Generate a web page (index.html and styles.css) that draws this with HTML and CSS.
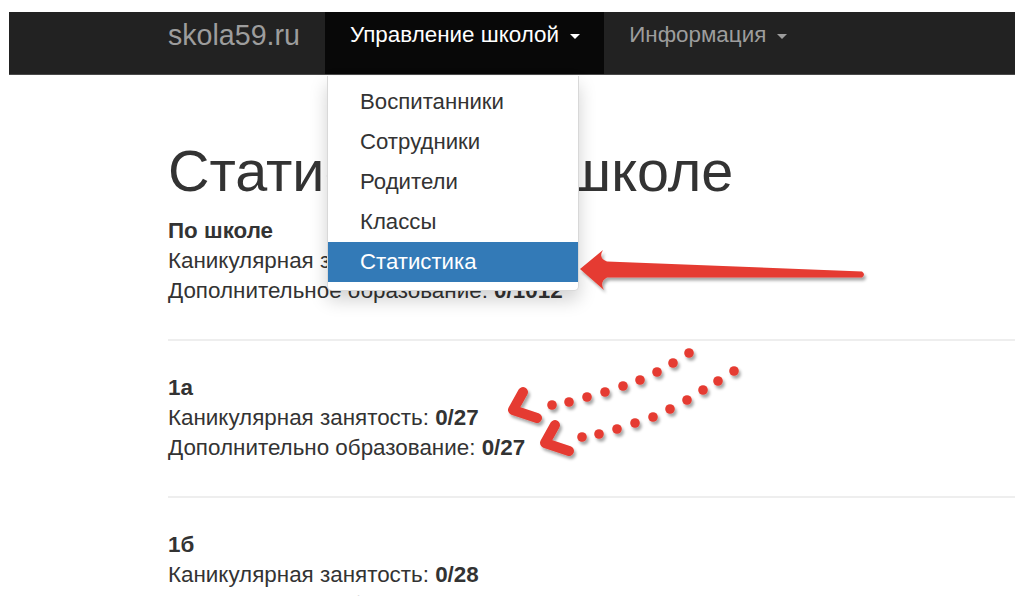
FILE: index.html
```html
<!DOCTYPE html>
<html lang="ru">
<head>
<meta charset="utf-8">
<title>skola59.ru — Статистика по школе</title>
<link rel="stylesheet" href="styles.css">
</head>
<body>
<nav class="navbar">
  <div class="navbar-inner">
    <a class="brand" href="#">skola59.ru</a>
    <ul class="nav">
      <li class="nav-item open">
        <a class="nav-link" href="#">Управление школой <span class="caret"></span></a>
        <ul class="dropdown">
          <li><a href="#">Воспитанники</a></li>
          <li><a href="#">Сотрудники</a></li>
          <li><a href="#">Родители</a></li>
          <li><a href="#">Классы</a></li>
          <li class="active"><a href="#">Статистика</a></li>
        </ul>
      </li>
      <li class="nav-item">
        <a class="nav-link" href="#">Информация <span class="caret"></span></a>
      </li>
    </ul>
  </div>
</nav>

<main class="container">
  <h1 class="title">Статистика по школе</h1>

  <section class="stat">
    <div class="stat-name">По школе</div>
    <div>Каникулярная занятость: <b>0/1012</b></div>
    <div>Дополнительное образование: <b>0/1012</b></div>
  </section>
  <hr class="sep">
  <section class="stat">
    <div class="stat-name">1а</div>
    <div>Каникулярная занятость: <b>0/27</b></div>
    <div>Дополнительно образование: <b>0/27</b></div>
  </section>
  <hr class="sep">
  <section class="stat">
    <div class="stat-name">1б</div>
    <div>Каникулярная занятость: <b>0/28</b></div>
    <div>Дополнительно образование: <b>0/28</b></div>
  </section>
</main>

<svg class="marks" width="1015" height="596" viewBox="0 0 1015 596" aria-hidden="true">
  <defs>
    <filter id="shade" x="-10%" y="-30%" width="130%" height="180%">
      <feDropShadow dx="2" dy="3" stdDeviation="1.6" flood-color="#000" flood-opacity="0.35"/>
    </filter>
  </defs>
  <g fill="#e53b30" stroke="none" filter="url(#shade)">
    <!-- long arrow towards the selected menu entry -->
    <path d="M580,269 L603,250 Q598,258 607,261.5 L862,271.5 Q866,274.5 862,277.5 L607,277.5 Q599,282 604,290 Z"/>
    <!-- upper dotted arrow -->
    <circle cx="689" cy="353" r="4.8"/>
    <circle cx="673" cy="363" r="4.8"/>
    <circle cx="657" cy="372" r="4.8"/>
    <circle cx="640" cy="380" r="4.8"/>
    <circle cx="623" cy="386" r="4.8"/>
    <circle cx="605" cy="392" r="4.8"/>
    <circle cx="587" cy="397" r="4.8"/>
    <circle cx="569" cy="402" r="4.8"/>
    <circle cx="552" cy="405" r="4.8"/>
    <!-- lower dotted arrow -->
    <circle cx="734" cy="371" r="4.8"/>
    <circle cx="718" cy="381" r="4.8"/>
    <circle cx="703" cy="390" r="4.8"/>
    <circle cx="687" cy="400" r="4.8"/>
    <circle cx="670" cy="409" r="4.8"/>
    <circle cx="653" cy="417" r="4.8"/>
    <circle cx="635" cy="423" r="4.8"/>
    <circle cx="617" cy="429" r="4.8"/>
    <circle cx="599" cy="434" r="4.8"/>
    <circle cx="582" cy="437" r="4.8"/>
  </g>
  <g fill="none" stroke="#e53b30" stroke-width="10" stroke-linecap="round" stroke-linejoin="round" filter="url(#shade)">
    <path d="M523,392 L513,410 L537,418"/>
    <path d="M555,425 L545,443 L569,451"/>
  </g>
</svg>
</body>
</html>
```

FILE: styles.css
```css
html, body {
  margin: 0;
  padding: 0;
  background: #fff;
}

body {
  position: relative;
  width: 1015px;
  height: 596px;
  overflow: hidden;
  font-family: "Liberation Sans", Arial, Helvetica, sans-serif;
  font-size: 22.4px;
  line-height: 30px;
  color: #333;
}

a {
  text-decoration: none;
}

/* top navigation bar */
.navbar {
  margin: 12px 0 0 9px;
  height: 62px;
  background: #222;
  border-bottom: 1px solid #4a4a4a;
}

.navbar-inner {
  display: flex;
  align-items: stretch;
  height: 100%;
  padding-left: 159px;
}

.brand {
  width: 157px;
  padding-top: 6px;
  font-size: 28.6px;
  line-height: 34px;
  color: #9d9d9d;
}

.nav {
  display: flex;
  margin: 0;
  padding: 0;
  list-style: none;
}

.nav-item {
  position: relative;
}

.nav-link {
  display: block;
  height: 100%;
  box-sizing: border-box;
  padding: 8px 24px 0 25px;
  font-size: 22.4px;
  color: #9d9d9d;
}

.nav-item.open .nav-link {
  background: #080808;
  color: #fff;
}

.caret {
  display: inline-block;
  width: 0;
  height: 0;
  margin-left: 5px;
  vertical-align: middle;
  border-top: 5px solid;
  border-left: 5px solid transparent;
  border-right: 5px solid transparent;
}

/* open dropdown under "Управление школой" */
.dropdown {
  position: absolute;
  top: 64px;
  left: 2px;
  z-index: 5;
  width: 252px;
  box-sizing: border-box;
  margin: 0;
  padding: 6px 0 8px;
  list-style: none;
  background: #fff;
  border: 1px solid rgba(0, 0, 0, 0.15);
  border-top: 0;
  border-radius: 0 0 5px 5px;
  box-shadow: 0 9px 18px rgba(0, 0, 0, 0.18);
}

.dropdown a {
  display: block;
  padding-left: 32px;
  font-size: 22.2px;
  line-height: 40px;
  color: #333;
}

.dropdown .active a {
  background: #337ab7;
  color: #fff;
}

/* page content */
.container {
  margin-left: 168px;
}

.title {
  margin: 67px 0 15px;
  font-size: 57.5px;
  line-height: 59px;
  font-weight: 500;
  color: #333;
}

.stat-name,
.stat b {
  font-weight: bold;
}

.sep {
  margin: 33px 0 32px;
  border: 0;
  border-top: 2px solid #eee;
}

/* annotation layer drawn over the page */
.marks {
  position: absolute;
  top: 0;
  left: 0;
  z-index: 10;
  pointer-events: none;
}
```
